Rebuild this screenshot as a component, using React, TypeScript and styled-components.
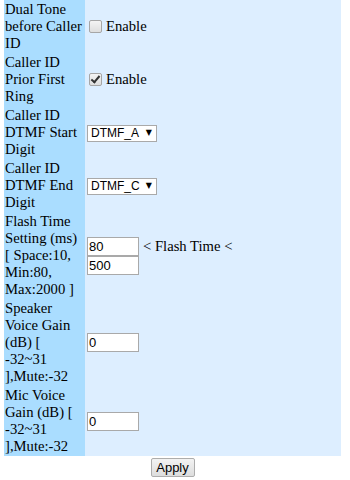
import React from "react";
import styled, { createGlobalStyle } from "styled-components";

const GlobalStyle = createGlobalStyle`
  html, body {
    margin: 0;
    padding: 0;
    background: #ffffff;
  }
  body {
    font-family: "Liberation Serif", "Times New Roman", serif;
    font-size: 11pt;
    line-height: normal;
    color: #000000;
  }
`;

const Page = styled.form`
  width: 337px;
  margin-left: 4px;
`;

const SettingsTable = styled.div`
  display: flex;
  flex-direction: column;
`;

const Row = styled.div`
  display: grid;
  grid-template-columns: 81px 1fr;
`;

const Label = styled.div`
  background: #aaddff;
  padding: 1px;
`;

const Value = styled.div`
  background: #ddeeff;
  padding: 1px;
  display: flex;
  flex-direction: column;
  justify-content: center;
`;

const Line = styled.div`
  display: flex;
  align-items: center;
`;

const CheckLabel = styled.label`
  display: flex;
  align-items: center;
`;

const CheckBox = styled.input.attrs({ type: "checkbox" })`
  appearance: none;
  width: 13px;
  height: 13px;
  margin: 3px 4px 3px 3px;
  border: 1px solid #a6a6a6;
  border-radius: 2px;
  background: linear-gradient(#f4f4f4, #dedede);
  position: relative;
  box-sizing: border-box;

  &:checked::after {
    content: "";
    position: absolute;
    left: 3px;
    top: 0px;
    width: 3px;
    height: 7px;
    border: solid #333333;
    border-width: 0 2px 2px 0;
    transform: rotate(40deg);
  }
`;

const SelectBox = styled.div`
  position: relative;
  width: 70px;
  height: 17px;
  margin-left: 1px;
`;

const Select = styled.select`
  appearance: none;
  width: 100%;
  height: 100%;
  box-sizing: border-box;
  border: 1px solid #a9a9a9;
  background: #ffffff;
  font-family: "Liberation Sans", Arial, sans-serif;
  font-size: 12px;
  color: #000000;
  padding: 0 0 0 3px;
  border-radius: 0;
  outline: none;
`;

const Arrow = styled.span`
  position: absolute;
  right: 5px;
  top: 1px;
  font-family: "DejaVu Sans", sans-serif;
  font-size: 8px;
  line-height: 15px;
  pointer-events: none;
`;

const TextInput = styled.input.attrs({ type: "text" })`
  width: 52px;
  height: 19px;
  box-sizing: border-box;
  margin: 0 0 0 1px;
  border: 1px solid #a9a9a9;
  padding: 0 1px;
  font-family: "Liberation Sans", Arial, sans-serif;
  font-size: 13px;
  color: #000000;
  background: #ffffff;
  outline: none;
`;

const Hint = styled.span`
  margin-left: 4px;
`;

const Footer = styled.div`
  display: flex;
  justify-content: center;
  padding-top: 2px;
`;

const ApplyButton = styled.button`
  width: 44px;
  height: 19px;
  padding: 0;
  border: 1px solid #adadad;
  border-radius: 2px;
  background: linear-gradient(#f3f3f3, #dddddd);
  font-family: "Liberation Sans", Arial, sans-serif;
  font-size: 13px;
  color: #000000;
`;

const DtmfSelect = ({ value }: { value: string }) => (
  <SelectBox>
    <Select defaultValue={value}>
      <option value="DTMF_A">DTMF_A</option>
      <option value="DTMF_B">DTMF_B</option>
      <option value="DTMF_C">DTMF_C</option>
      <option value="DTMF_D">DTMF_D</option>
    </Select>
    <Arrow>▼</Arrow>
  </SelectBox>
);

const App = () => {
  return (
    <>
      <GlobalStyle />
      <Page onSubmit={(e) => e.preventDefault()}>
        <SettingsTable>
          <Row>
            <Label>Dual Tone before Caller ID</Label>
            <Value>
              <CheckLabel>
                <CheckBox />
                Enable
              </CheckLabel>
            </Value>
          </Row>
          <Row>
            <Label>Caller ID Prior First Ring</Label>
            <Value>
              <CheckLabel>
                <CheckBox defaultChecked />
                Enable
              </CheckLabel>
            </Value>
          </Row>
          <Row>
            <Label>Caller ID DTMF Start Digit</Label>
            <Value>
              <DtmfSelect value="DTMF_A" />
            </Value>
          </Row>
          <Row>
            <Label>Caller ID DTMF End Digit</Label>
            <Value>
              <DtmfSelect value="DTMF_C" />
            </Value>
          </Row>
          <Row>
            <Label>Flash Time Setting (ms) [ Space:10, Min:80, Max:2000 ]</Label>
            <Value>
              <Line>
                <TextInput defaultValue="80" />
                <Hint>&lt; Flash Time &lt;</Hint>
              </Line>
              <Line>
                <TextInput defaultValue="500" />
              </Line>
            </Value>
          </Row>
          <Row>
            <Label>Speaker Voice Gain (dB) [ -32~31 ],Mute:-32</Label>
            <Value>
              <Line>
                <TextInput defaultValue="0" />
              </Line>
            </Value>
          </Row>
          <Row>
            <Label>Mic Voice Gain (dB) [ -32~31 ],Mute:-32</Label>
            <Value>
              <Line>
                <TextInput defaultValue="0" />
              </Line>
            </Value>
          </Row>
        </SettingsTable>
        <Footer>
          <ApplyButton type="submit">Apply</ApplyButton>
        </Footer>
      </Page>
    </>
  );
};

export default App;
